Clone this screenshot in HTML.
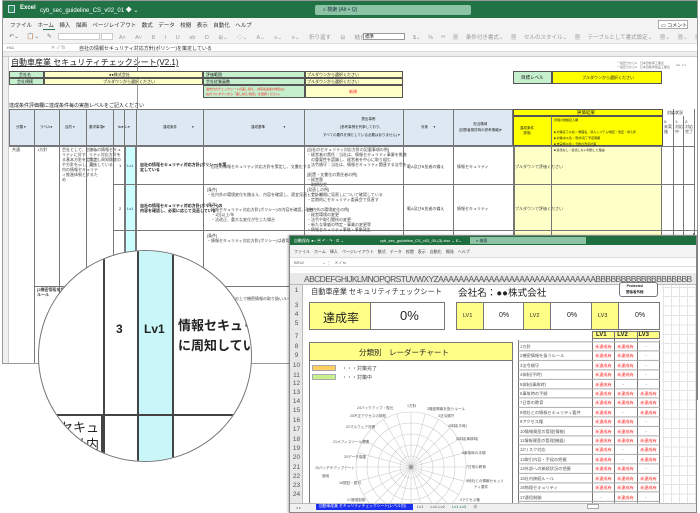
<!DOCTYPE html>
<html><head><meta charset="utf-8">
<style>
*{margin:0;padding:0;box-sizing:border-box}
body{width:700px;height:513px;overflow:hidden;background:#fff;position:relative;font-family:"Liberation Sans","Noto Sans CJK JP",sans-serif;color:#222}
.a{position:absolute}
.t{position:absolute;white-space:nowrap}
.b{border:1px solid #555}
.g{background:#c6efce}
.y{background:#ffffc8}
.yy{background:#ffff00}
.cy{background:#ccffff}
.hd{background:#dde8f3}
.small{font-size:4px;color:#444;line-height:5px}
.red{color:#ff2020}
.rn{position:absolute;left:0;width:13px;text-align:center;font-size:6.5px;color:#555}
</style></head><body>

<!-- back window -->
<div class="a" style="left:2px;top:0;width:696px;height:364px;border:1px solid #999;background:#fff;overflow:hidden">
  <div class="a" style="left:0;top:0;width:696px;height:17px;background:#217346"></div>
  <div class="a" style="left:5px;top:4px;width:7px;height:8px;border:1px solid #cde;background:#2e8b57"></div>
  <div class="t" style="left:17px;top:4px;font-size:6px;color:#fff;font-weight:bold">Excel</div>
  <div class="t" style="left:37px;top:4px;font-size:6px;color:#fff">cyb_sec_guideline_CS_v02_01 ◆ ⌄</div>
  <div class="a" style="left:312px;top:4px;width:156px;height:10px;background:#8cc3a5;border-radius:2px"></div>
  <div class="t" style="left:320px;top:5px;font-size:5px;color:#234">⌕ 検索 (Alt + Q)</div>
  <div class="a" style="left:0;top:17px;width:696px;height:25px;background:#f3f3f3"></div>
  <div class="t" style="left:7px;top:20px;font-size:5.5px;color:#333;word-spacing:8px">ファイル　ホーム　挿入　描画　ページレイアウト　数式　データ　校閲　表示　自動化　ヘルプ</div>
  <div class="a" style="left:40px;top:28px;width:12px;height:1px;background:#217346"></div>
  <div class="a" style="left:655px;top:19px;width:30px;height:9px;border:1px solid #aaa;background:#fff"></div>
  <div class="t" style="left:658px;top:21px;font-size:5px">▭ コメント</div>
  <div class="t" style="left:6px;top:32px;font-size:6px;color:#777;word-spacing:6px">↶⌄ 📋⌄ ✎</div>
  <div class="a" style="left:55px;top:32px;width:42px;height:7px;border:1px solid #ccc;background:#fff"></div>
  <div class="a" style="left:98px;top:32px;width:12px;height:7px;border:1px solid #ccc;background:#fff"></div>
  <div class="t" style="left:116px;top:32px;font-size:5.5px;color:#999;word-spacing:8px">A˄ A˅ B I U ab D ⊞⌄ ◇⌄ A⌄ ≡⌄ ≡⌄ 折り返す ⊟ 結合⌄</div>
  <div class="a" style="left:360px;top:32px;width:42px;height:7px;border:1px solid #999;background:#fff"></div>
  <div class="t" style="left:362px;top:33px;font-size:4.5px">標準</div>
  <div class="t" style="left:410px;top:32px;font-size:5.5px;color:#999;word-spacing:6px">$⌄ % ⁹⁸ ▦ 条件付き書式⌄ ▦ セルのスタイル⌄ ▦ テーブルとして書式設定⌄ ▦⌄ ▦⌄ ▦⌄ Σ⌄</div>
  <div class="a" style="left:0;top:42px;width:696px;height:9px;background:#fff;border-top:1px solid #ddd;border-bottom:1px solid #ddd"></div>
  <div class="t" style="left:4px;top:44px;font-size:4px;color:#555">H11</div>
  <div class="t" style="left:48px;top:43px;font-size:5px;color:#999">✕ ✓ fx</div>
  <div class="t" style="left:76px;top:44px;font-size:5px;color:#333">自社の情報セキュリティ対応方針(ポリシー)を策定している</div>
  <div class="a" style="left:0;top:51px;width:696px;height:5px;background:#eee;border-bottom:1px solid #ccc"></div>
  <div class="a" style="left:0;top:56px;width:6px;height:308px;background:#f0f0f0;border-right:1px solid #ccc"></div>

  <div class="t" style="left:8px;top:56px;font-size:8px;text-decoration:underline">自動車産業 セキュリティチェックシート(V2.1)</div>
  <div class="a" style="left:134px;top:56px;width:1px;height:52px;background:#999"></div>
  <div class="t" style="left:614px;top:60px;font-size:3px;color:#777;line-height:4px">一般区分からA　日本自動車工業会<br>一般区分からA　日本自動車部品工業会</div>
  <div class="t" style="left:673px;top:62px;font-size:3px;color:#777">Ver. 2.1</div>

  <div class="a g b" style="left:6px;top:70px;width:35px;height:7px"></div>
  <div class="a y b" style="left:41px;top:70px;width:159px;height:7px"></div>
  <div class="a g b" style="left:6px;top:77px;width:35px;height:7px"></div>
  <div class="a y b" style="left:41px;top:77px;width:159px;height:7px"></div>
  <div class="t" style="left:16px;top:71px;font-size:4px">会社名</div>
  <div class="t" style="left:14px;top:78px;font-size:4px">会社規模</div>
  <div class="t" style="left:106px;top:71px;font-size:4px">●●株式会社</div>
  <div class="t" style="left:100px;top:78px;font-size:4px">プルダウンから選択ください</div>
  <div class="a g b" style="left:200px;top:70px;width:102px;height:7px"></div>
  <div class="a y b" style="left:302px;top:70px;width:98px;height:7px"></div>
  <div class="a g b" style="left:200px;top:77px;width:102px;height:7px"></div>
  <div class="a y b" style="left:302px;top:77px;width:98px;height:7px"></div>
  <div class="a g b" style="left:200px;top:84px;width:102px;height:13px"></div>
  <div class="a y b" style="left:302px;top:84px;width:98px;height:13px"></div>
  <div class="t" style="left:203px;top:71px;font-size:4px">評価範囲</div>
  <div class="t" style="left:203px;top:78px;font-size:4px">会社従業員数</div>
  <div class="t" style="left:304px;top:71px;font-size:4px">プルダウンから選択ください</div>
  <div class="t" style="left:304px;top:78px;font-size:4px">プルダウンから選択ください</div>
  <div class="t red" style="left:203px;top:86px;font-size:3px;line-height:5px">過去分のチェックシートの差し替え、共有先追加の場合は、<br>右のプルダウンから「差し替え/改善」を選択ください。</div>
  <div class="t red" style="left:346px;top:88px;font-size:4px">新規</div>
  <div class="a g b" style="left:510px;top:70px;width:39px;height:13px"></div>
  <div class="a yy b" style="left:549px;top:70px;width:110px;height:13px"></div>
  <div class="t" style="left:518px;top:74px;font-size:4.5px">目標レベル</div>
  <div class="t" style="left:579px;top:74px;font-size:4px">プルダウンから選択ください</div>

  <div class="t" style="left:6px;top:101px;font-size:5px">達成条件評価欄に達成条件毎の実施レベルをご記入ください</div>

  <div class="a hd" style="left:6px;top:108px;width:504px;height:37px;border:1px solid #777"></div>
  <div class="a" style="left:6px;top:108px;width:686px;height:255px;border-right:1px solid #777;
   background:
   linear-gradient(#777,#777) 25px 0/1px 100% no-repeat,
   linear-gradient(#777,#777) 50px 0/1px 100% no-repeat,
   linear-gradient(#777,#777) 77px 0/1px 100% no-repeat,
   linear-gradient(#777,#777) 104px 0/1px 100% no-repeat,
   linear-gradient(#777,#777) 115px 0/1px 100% no-repeat,
   linear-gradient(#777,#777) 127px 0/1px 100% no-repeat,
   linear-gradient(#777,#777) 194px 0/1px 100% no-repeat,
   linear-gradient(#777,#777) 295px 0/1px 100% no-repeat,
   linear-gradient(#777,#777) 394px 0/1px 100% no-repeat,
   linear-gradient(#777,#777) 444px 0/1px 100% no-repeat,
   linear-gradient(#777,#777) 504px 0/1px 100% no-repeat"></div>
  <div class="a cy" style="left:122px;top:145px;width:11px;height:218px;border-left:1px solid #777;border-right:1px solid #777"></div>
  <div class="a yy" style="left:510px;top:108px;width:150px;height:7px;border:1px solid #555"></div>
  <div class="t" style="left:574px;top:109px;font-size:4.5px">評価結果</div>
  <div class="a yy" style="left:510px;top:115px;width:150px;height:30px;border:1px solid #555"></div>
  <div class="a" style="left:548px;top:115px;width:1px;height:248px;background:#777"></div>
  <div class="a y" style="left:511px;top:145px;width:148px;height:218px;border-left:1px solid #777;border-right:1px solid #777"></div>
  <div class="a" style="left:548px;top:145px;width:1px;height:218px;background:#777"></div>
  <div class="a" style="left:670px;top:108px;width:1px;height:255px;background:#777"></div>
  <div class="a" style="left:680px;top:115px;width:1px;height:248px;background:#777"></div>
  <div class="t" style="left:664px;top:109px;font-size:4px">対応状況</div>
  <div class="t small" style="left:661px;top:118px">0:<br>未実<br>施</div>
  <div class="t small" style="left:672px;top:118px">1:<br>対応<br>中</div>
  <div class="t small" style="left:682px;top:118px">2:<br>対応<br>完了</div>
  <div class="t" style="left:517px;top:125px;font-size:3.5px;line-height:5px;text-align:center">達成条件<br>評価</div>
  <div class="t" style="left:551px;top:116px;font-size:3px;line-height:6px">評価の根拠記入欄<br><br>■ 対策完了(2点)：規程名、導入システム/規定・改定・導入年<br>■ 対策中(1点)：現状/完了予定時期<br>■ 未実施(0点)：今後の改善計画<br>■ 該当なし：該当しない判断した理由</div>
  <div class="t" style="left:13px;top:124px;font-size:3.5px">分類 ▾</div>
  <div class="t" style="left:37px;top:124px;font-size:3.5px">ラベル▾</div>
  <div class="t" style="left:62px;top:124px;font-size:3.5px">目的 ▾</div>
  <div class="t" style="left:86px;top:124px;font-size:3.5px">要求事項▾</div>
  <div class="t" style="left:115px;top:124px;font-size:3.5px">№▾ レ▾</div>
  <div class="t" style="left:160px;top:124px;font-size:3.5px">達成条件　　　　 ▾</div>
  <div class="t" style="left:248px;top:124px;font-size:3.5px">達成基準　　　　　 ▾</div>
  <div class="t" style="left:320px;top:114px;font-size:3.5px;line-height:8px;text-align:center">　　　　提出事例<br>(参考事例を列挙しており、<br>すべての要件を満たしている必要はありません) ▾</div>
  <div class="t" style="left:418px;top:124px;font-size:3.5px">対象 　 ▾</div>
  <div class="t" style="left:456px;top:120px;font-size:3.5px;line-height:6px;text-align:center">担当領域<br>(回答者検討時の参考情報)▾</div>
  <div class="a" style="left:6px;top:145px;width:686px;height:1px;background:#777"></div>
  <div class="a" style="left:110px;top:183px;width:582px;height:1px;background:#777"></div>
  <div class="a" style="left:110px;top:229px;width:582px;height:1px;background:#777"></div>
  <div class="a" style="left:32px;top:285px;width:660px;height:1px;background:#777"></div>
  <div class="t small" style="left:9px;top:146px">共通</div>
  <div class="t small" style="left:34px;top:146px">1方針</div>
  <div class="t small" style="left:59px;top:146px">会社として、セキュ<br>リティに対す<br>る基本方針を定え方<br>や方針を示し、社<br>内の情報セキュリテ<br>ィ推進体制とするた<br>め</div>
  <div class="t small" style="left:86px;top:146px">自社の情報セキュ<br>リティ対応方針を<br>策定し周知徹底の<br>実施している</div>
  <div class="t" style="left:116px;top:162px;font-size:4px">1</div>
  <div class="t" style="left:124px;top:162px;font-size:4px;color:#336">Lv1</div>
  <div class="t small" style="left:137px;top:161px;font-weight:bold;color:#222">自社の情報セキュリティ対応方針(ポリシー)を策<br>定している</div>
  <div class="t small" style="left:204px;top:163px">・自社の情報セキュリティ対応方針を策定し、文書化する</div>
  <div class="t small" style="left:304px;top:146px">[自社のセキュリティ対応方針の記載事項の例]<br>・経営者の責任：当社は、情報セキュリティ事業を推進<br>　の重要性を認識し、経営者を中心に取り組む<br>・法令順守：当社は、情報セキュリティ関連する法令を<br><br>[配置・文書化の責任者の例]<br>・経営層<br>・取締役会</div>
  <div class="t small" style="left:404px;top:163px">範A及びB並者の備え</div>
  <div class="t small" style="left:454px;top:163px">情報セキュリティ</div>
  <div class="t small" style="left:512px;top:163px">プルダウンで評価ください</div>
  <div class="t" style="left:116px;top:205px;font-size:4px">2</div>
  <div class="t" style="left:124px;top:205px;font-size:4px;color:#336">Lv1</div>
  <div class="t small" style="left:137px;top:202px;font-weight:bold;color:#222">自社の情報セキュリティ対応方針(ポリシー)の<br>内容を確認し、必要に応じて見直している</div>
  <div class="t small" style="left:204px;top:186px">[条件]<br>・社内外の環境変化を踏まえ、内容を確認し、適宜見直している<br><br>[条件]<br>・情報セキュリティ対応方針(ポリシー)の内容を確認、改善<br>　・1回以上/年<br>　・法改正、重大な変化が生じた場合</div>
  <div class="t small" style="left:304px;top:186px">[見直しの例]<br>・会計期間に見直しについて確認している<br>・定期的にセキュリティ委員会で見直す<br><br>[社内外の環境変化の例]<br>・経営環境の変更<br>・法令や取引関係の変更<br>・新たな脅威の特定・事業の変更等<br>・情報セキュリティ事故・事象発生</div>
  <div class="t small" style="left:404px;top:205px">範A及びB並者の備え</div>
  <div class="t small" style="left:454px;top:205px">情報セキュリティ</div>
  <div class="t small" style="left:512px;top:205px">プルダウンで評価ください</div>
  <div class="t small" style="left:204px;top:232px">[条件]<br>・情報セキュリティ対応方針(ポリシー)は適切に周知されている</div>
  <div class="t small" style="left:34px;top:286px;font-weight:bold">[2機密情報を扱う<br>ルール</div>
  <div class="t small" style="left:204px;top:290px">[条件]<br>・取引先と合意の上で機密情報の取り扱いルールを<br>　定めている</div>
</div>

<div class="a" style="left:688px;top:230px;width:10px;height:170px;border-right:1px solid #888;border-top:1px solid #888"></div>
<div class="a" style="left:684px;top:233px;width:10px;height:163px;border-right:1px solid #888"></div>

<!-- magnifier -->
<div class="a" style="left:38px;top:250px;width:214px;height:212px;border-radius:50%;border:1px solid #777;background:#fff;overflow:hidden">
  <div class="a" style="left:98px;top:0;width:37px;height:212px;background:#c8f6f9;border-left:2px solid #444;border-right:2px solid #444"></div>
  <div class="a" style="left:64px;top:0;width:2px;height:212px;background:#444"></div>
  <div class="a" style="left:0;top:163px;width:214px;height:2px;background:#444"></div>
  <div class="a" style="left:0;top:165px;width:64px;height:47px;border-right:2px solid #444;overflow:hidden">
    <div class="t" style="right:2px;top:3px;font-size:13px;line-height:17px;text-align:right">報部のセキュ<br>を社内</div>
  </div>
  <div class="t" style="left:77px;top:71px;font-size:12px;font-weight:bold">3</div>
  <div class="t" style="left:105px;top:71px;font-size:12px;font-weight:bold">Lv1</div>
  <div class="t" style="left:139px;top:65px;font-size:13px;font-weight:bold;line-height:20px">情報セキュリティ方<br>に周知している</div>
</div>

<!-- front window -->
<div class="a" style="left:289px;top:235px;width:408px;height:278px;border:1px solid #888;background:#fff;overflow:hidden;box-shadow:-1px 0 2px rgba(0,0,0,.3)">
  <div class="a" style="left:0;top:0;width:408px;height:9px;background:#1e6e3f"></div>
  <div class="t" style="left:4px;top:2px;font-size:4px;color:#fff">自動保存 ●○ ▣ ↶ · ↷ · ⊡ ⌄</div>
  <div class="t" style="left:90px;top:2px;font-size:4px;color:#fff">cyb_sec_guideline_CS_v02_00-(3).xlsx ⌄ E⌄</div>
  <div class="a" style="left:180px;top:1px;width:116px;height:7px;background:#8cc3a5"></div>
  <div class="t" style="left:186px;top:2px;font-size:4px;color:#234">⌕ 検索</div>
  <div class="a" style="left:0;top:9px;width:408px;height:12px;background:#f3f3f3"></div>
  <div class="t" style="left:4px;top:13px;font-size:4px;color:#444;word-spacing:5px">ファイル　ホーム　挿入　ページレイアウト　数式　データ　校閲　表示　自動化　開発　ヘルプ</div>
  <div class="a" style="left:0;top:21px;width:408px;height:10px;background:#fff;border-top:1px solid #ddd;border-bottom:1px solid #ddd"></div>
  <div class="t" style="left:4px;top:24px;font-size:4px;color:#666">BR42 　　　　 ⌄ ⋮　✕ ✓ fx</div>
  <div class="a" style="left:0;top:31px;width:408px;height:6px;background:#fff"></div>
  <div class="a" style="left:0;top:37px;width:408px;height:12px;background:#e8e8e8;border-bottom:1px solid #bbb"></div>
  <div class="t" style="left:14px;top:38px;font-size:8.5px;color:#555;letter-spacing:-0.6px">ABCDEFGHIJKLMNOPQRSTUVWXYZAAAAAAAAAAAAAAAAAAAAAAAAAAAAAAABBBBBBBBBBBBBBBBBBB</div>
  <div class="a" style="left:0;top:49px;width:13px;height:218px;background:#e8e8e8;border-right:1px solid #bbb"></div>
  <div class="rn" style="top:51px">1</div>
  <div class="rn" style="top:66px">3</div>
  <div class="rn" style="top:75px">4</div>
  <div class="rn" style="top:84px">5</div>
  <div class="rn" style="top:97px">7</div>
  <div class="rn" style="top:107px">8</div>
  <div class="rn" style="top:116px">9</div>
  <div class="rn" style="top:126px">10</div>
  <div class="rn" style="top:136px">11</div>
  <div class="rn" style="top:144px">12</div>
  <div class="rn" style="top:153px">13</div>
  <div class="rn" style="top:162px">14</div>
  <div class="rn" style="top:171px">15</div>
  <div class="rn" style="top:181px">16</div>
  <div class="rn" style="top:190px">17</div>
  <div class="rn" style="top:200px">18</div>
  <div class="rn" style="top:209px">19</div>
  <div class="rn" style="top:218px">20</div>
  <div class="rn" style="top:228px">21</div>
  <div class="rn" style="top:237px">22</div>
  <div class="rn" style="top:246px">23</div>
  <div class="rn" style="top:255px">24</div>
  <div class="a" style="left:14px;top:49px;width:394px;height:218px;background:
   repeating-linear-gradient(90deg,transparent 0 7px,#e4e4e4 7px 8px),
   repeating-linear-gradient(0deg,transparent 0 8.4px,#e4e4e4 8.4px 9.4px)"></div>
  <div class="a" style="left:14px;top:49px;width:358px;height:218px;background:#fff"></div>

  <div class="t" style="left:21px;top:51px;font-size:7.2px;color:#333">自動車産業 セキュリティチェックシート</div>
  <div class="t" style="left:168px;top:49px;font-size:9.6px;color:#222">会社名：●●株式会社</div>
  <div class="a" style="left:329px;top:46px;width:39px;height:15px;border:1px solid #777;border-radius:3px;background:#fff"></div>
  <div class="t" style="left:336px;top:47px;font-size:3.5px;line-height:6px;text-align:center;font-weight:bold">Protected<br>関係者外秘</div>

  <div class="a" style="left:19px;top:66px;width:136px;height:28px;border:1px solid #777;background:#fff"></div>
  <div class="a" style="left:20px;top:67px;width:61px;height:26px;background:#ffff88;border-right:1px solid #777"></div>
  <div class="t" style="left:33px;top:73px;font-size:12px">達成率</div>
  <div class="t" style="left:110px;top:72px;font-size:13px">0%</div>
  <div class="a" style="left:166px;top:66px;width:204px;height:28px;border:1px solid #777;background:#fff"></div>
  <div class="a" style="left:167px;top:67px;width:27px;height:26px;background:#ffff88;border-right:1px solid #777"></div>
  <div class="a" style="left:233px;top:67px;width:28px;height:26px;background:#ffff88;border-right:1px solid #777;border-left:1px solid #777"></div>
  <div class="a" style="left:301px;top:67px;width:28px;height:26px;background:#ffff88;border-right:1px solid #777;border-left:1px solid #777"></div>
  <div class="t" style="left:173px;top:77px;font-size:5.5px">LV1</div>
  <div class="t" style="left:209px;top:76px;font-size:7px">0%</div>
  <div class="t" style="left:240px;top:77px;font-size:5.5px">LV2</div>
  <div class="t" style="left:277px;top:76px;font-size:7px">0%</div>
  <div class="t" style="left:308px;top:77px;font-size:5.5px">LV3</div>
  <div class="t" style="left:345px;top:76px;font-size:7px">0%</div>

  <div class="a" style="left:19px;top:106px;width:204px;height:172px;border:1px solid #777;background:#fff"></div>
  <div class="a" style="left:20px;top:107px;width:202px;height:18px;background:#ffff88;border-bottom:1px solid #777"></div>
  <div class="t" style="left:69px;top:111px;font-size:7.5px">分類別　レーダーチャート</div>
  <div class="a" style="left:22px;top:129px;width:24px;height:6px;background:#ffd060;border:1px solid #aaa"></div>
  <div class="a" style="left:22px;top:138px;width:24px;height:6px;background:#c8f090;border:1px solid #aaa"></div>
  <div class="t" style="left:52px;top:129px;font-size:5px;color:#444">・・・対策完了</div>
  <div class="t" style="left:52px;top:138px;font-size:5px;color:#444">・・・対策中</div>
  <svg class="a" style="left:20px;top:125px" width="202" height="142">
   <g transform="translate(101,106)" stroke="#ccc" stroke-width="0.6" fill="none">
    <circle r="55"/><circle r="44"/><circle r="33"/><circle r="22"/><circle r="11"/>
    <path d="M0 0L0 -55M0 0L14.2 -53.1M0 0L27.5 -47.6M0 0L38.9 -38.9M0 0L47.6 -27.5M0 0L53.1 -14.2M0 0L55 0M0 0L53.1 14.2M0 0L47.6 27.5M0 0L38.9 38.9M0 0L27.5 47.6M0 0L14.2 53.1M0 0L0 55M0 0L-14.2 53.1M0 0L-27.5 47.6M0 0L-38.9 38.9M0 0L-47.6 27.5M0 0L-53.1 14.2M0 0L-55 0M0 0L-53.1 -14.2M0 0L-47.6 -27.5M0 0L-38.9 -38.9M0 0L-27.5 -47.6M0 0L-14.2 -53.1"/>
    <circle r="2" fill="#999" stroke="none"/>
   </g>
   <g font-size="3.6" fill="#555">
    <text x="97" y="46">1方針</text>
    <text x="117" y="49">2機密情報を扱うルール</text>
    <text x="128" y="56">3法令順守</text>
    <text x="138" y="66">4体制(平時)</text>
    <text x="146" y="79">5体制(事故時)</text>
    <text x="152" y="93">6事故時の手順</text>
    <text x="156" y="107">7日常の教育</text>
    <text x="156" y="121">8他社との情報セキュリ</text>
    <text x="164" y="127">ティ要件</text>
    <text x="150" y="140">9アクセス権</text>
    <text x="47" y="48">24バックアップ・復元</text>
    <text x="40" y="56">25不正アクセスの検知</text>
    <text x="36" y="67">22マルウェア対策</text>
    <text x="23" y="82">21オフィスツール関連</text>
    <text x="34" y="97">20データ保護</text>
    <text x="5" y="108">19パッチやアップデート</text>
    <text x="12" y="116">適用</text>
    <text x="29" y="123">18認証・認可</text>
    <text x="37" y="140">17通信制御</text>
   </g>
  </svg>

  <div class="a" style="left:228px;top:104px;width:142px;height:170px;border-left:1px solid #777;border-right:1px solid #777"></div>
  <div class="a" style="left:302px;top:95px;width:68px;height:8px;background:#ffff88;border:1px solid #777"></div>
  <div class="a" style="left:302px;top:95px;width:1px;height:180px;background:#777"></div>
  <div class="a" style="left:324px;top:95px;width:1px;height:180px;background:#777"></div>
  <div class="a" style="left:347px;top:95px;width:1px;height:180px;background:#777"></div>
  <div class="t" style="left:306px;top:96px;font-size:6px;font-weight:bold;word-spacing:9px">LV1 LV2 LV3</div>
  <div class="a" style="left:228px;top:104px;width:142px;height:170px;background:repeating-linear-gradient(0deg,transparent 0 8.4px,#aaa 8.4px 9.4px);background-position:0 0.4px"></div>
  <div class="t" style="left:230px;top:106px;font-size:4.2px;color:#555;line-height:9.4px">1方針<br>2機密情報を扱うルール<br>3法令順守<br>4体制(平時)<br>5体制(事故時)<br>6事故時の手順<br>7日常の教育<br>8他社との情報セキュリティ要件<br>9アクセス権<br>10情報資産の管理(情報)<br>11情報資産の管理(機器)<br>12リスク対応<br>13取引内容・手段の把握<br>14外部への接続状況の把握<br>15社内接続ルール<br>16物理セキュリティ<br>17通信制御<br>18認証・認可</div>
  <div class="t red" style="left:305px;top:106px;font-size:4.2px;line-height:9.4px">未達成有<br>未達成有<br>未達成有<br>未達成有<br>未達成有<br>未達成有<br>未達成有<br>未達成有<br>未達成有<br>未達成有<br>未達成有<br>未達成有<br>未達成有<br>未達成有<br>未達成有<br>未達成有<br><span style="color:#555">　 -</span></div>
  <div class="t red" style="left:327px;top:106px;font-size:4.2px;line-height:9.4px">未達成有<br>未達成有<br>未達成有<br>未達成有<br><span style="color:#555">　 -</span><br>未達成有<br>未達成有<br><span style="color:#555">　 -</span><br>未達成有<br>未達成有<br>未達成有<br><span style="color:#555">　 -</span><br><span style="color:#555">　 -</span><br>未達成有<br>未達成有<br>未達成有<br>未達成有</div>
  <div class="t red" style="left:350px;top:106px;font-size:4.2px;line-height:9.4px"><span style="color:#555">　 -</span><br><span style="color:#555">　 -</span><br><span style="color:#555">　 -</span><br><span style="color:#555">　 -</span><br><span style="color:#555">　 -</span><br>未達成有<br>未達成有<br>未達成有<br><span style="color:#555">　 -</span><br><span style="color:#555">　 -</span><br>未達成有<br>未達成有<br>未達成有<br><span style="color:#555">　 -</span><br>未達成有<br>未達成有<br><span style="color:#555">　 -</span></div>

  <div class="a" style="left:0;top:267px;width:408px;height:11px;background:#f0f0f0;border-top:1px solid #bbb"></div>
  <div class="t" style="left:6px;top:269px;font-size:4px;color:#888">◂ ▸</div>
  <div class="a" style="left:26px;top:268px;width:97px;height:6px;background:#1a2ff0"></div>
  <div class="t" style="left:29px;top:268px;font-size:3.8px;color:#fff">自動車産業 セキュリティチェックシート(レベル別)</div>
  <div class="t" style="left:127px;top:268px;font-size:4px;color:#555;word-spacing:6px">Lv1 Lv1-Lv2 <span style="color:#217346">Lv1-Lv3</span> ⊕</div>
  <div class="a" style="left:297px;top:268px;width:12px;height:5px;background:#fff;border:1px solid #aaa"></div>
</div>
</body></html>
